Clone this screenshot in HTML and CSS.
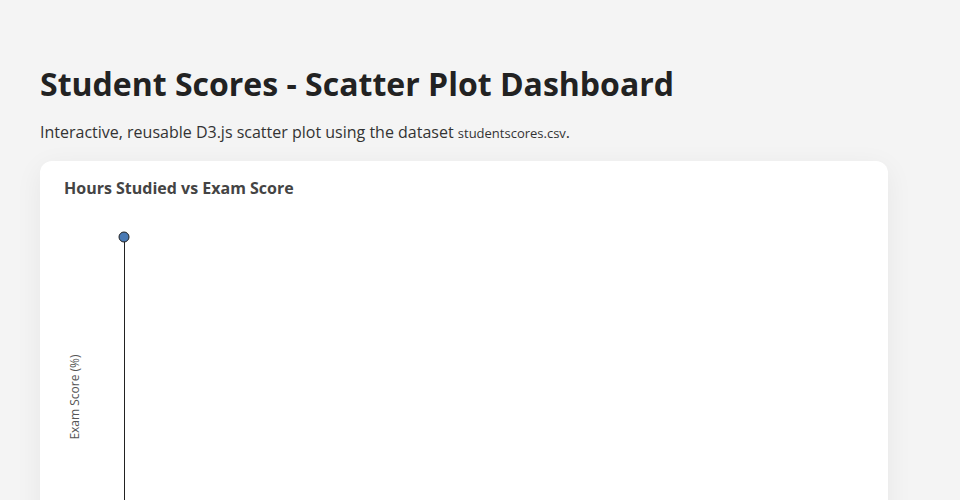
FILE: index.html
```html
<!DOCTYPE html>
<html lang="en">
<head>
<meta charset="utf-8">
<title>Student Scores - Scatter Plot Dashboard</title>
<link rel="stylesheet" href="styles.css">
</head>
<body>
<main class="page">
  <h1 class="page-title">Student Scores - Scatter Plot Dashboard</h1>
  <p class="page-sub">Interactive, reusable D3.js scatter plot using the dataset <code class="file">studentscores.csv</code>.</p>
  <section class="card">
    <h2 class="card-title">Hours Studied vs Exam Score</h2>
    <svg class="chart" width="800" height="400" viewBox="0 0 800 400">
      <line x1="60.5" y1="30" x2="60.5" y2="400" stroke="#222" stroke-width="1"/>
      <circle cx="60" cy="30" r="5" fill="#4a7ab4" stroke="#222" stroke-width="1"/>
      <text class="axis-label" transform="translate(15,190) rotate(-90)" text-anchor="middle">Exam Score (%)</text>
    </svg>
  </section>
</main>
</body>
</html>
```
FILE: styles.css
```css
html, body {
  margin: 0;
  padding: 0;
}
body {
  background: #f4f4f4;
  font-family: "Open Sans", "Liberation Sans", sans-serif;
  color: #222;
}
.page {
  padding: 40px;
}
.page-title {
  font-size: 32px;
  font-weight: 700;
  margin: 22px 0 16px;
  color: #222;
}
.page-sub {
  font-size: 16px;
  margin: 0 0 18px;
  color: #333;
}
.file {
  font-family: "Open Sans", "Liberation Sans", sans-serif;
  font-size: 13px;
}
.card {
  width: 848px;
  box-sizing: border-box;
  background: #fff;
  border-radius: 12px;
  padding: 16px 24px 24px;
  box-shadow: 0 6px 28px rgba(0, 0, 0, 0.06);
}
.card-title {
  font-size: 16px;
  font-weight: 700;
  margin: 0 0 8px;
  color: #444;
}
.chart {
  display: block;
}
.axis-label {
  font-family: "Open Sans", "Liberation Sans", sans-serif;
  font-size: 12px;
  fill: #555;
}
```
